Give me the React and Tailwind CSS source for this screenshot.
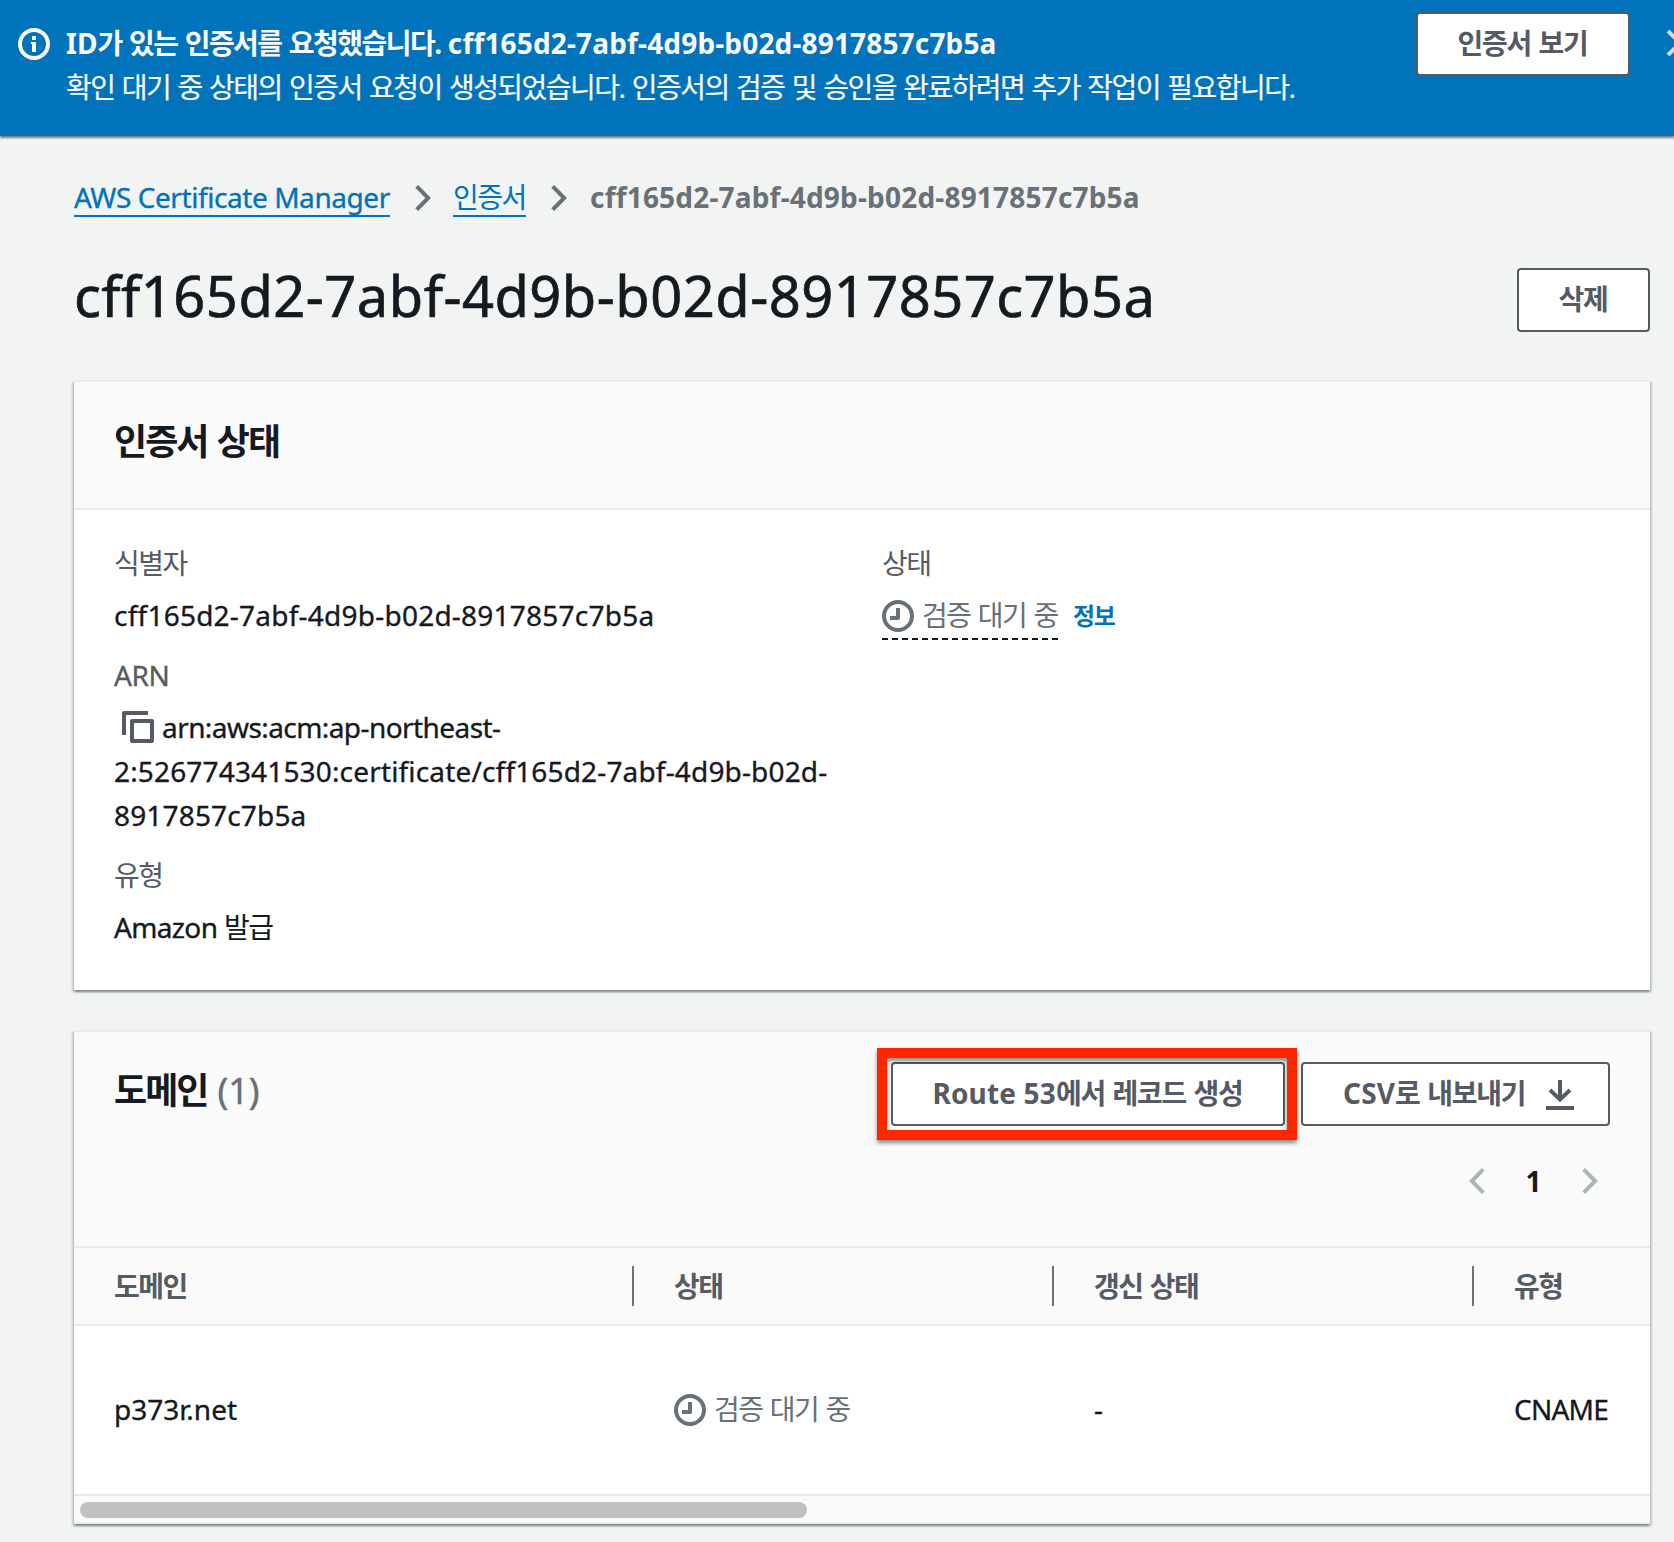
const CERT_ID = 'cff165d2-7abf-4d9b-b02d-8917857c7b5a';

/* Korean runs are set tighter than Latin ones, with the word gap kept. */
function Ko({ children, className = '' }) {
  return (
    <span className={'tracking-[-0.055em] [word-spacing:0.056em] ' + className}>{children}</span>
  );
}

/* Button labels carry a little extra letter spacing. */
function KoLabel({ children }) {
  return <span className="tracking-[-0.045em] [word-spacing:0.056em]">{children}</span>;
}

/* Latin body text, slightly heavier than regular. */
function Latin({ children, className = '' }) {
  return <span className={'[-webkit-text-stroke:0.012em_currentColor] ' + className}>{children}</span>;
}

function InfoIcon() {
  return (
    <svg viewBox="0 0 16 16" className="block size-8 shrink-0" fill="none">
      <circle cx="8" cy="8" r="7" stroke="currentColor" strokeWidth="2" />
      <path d="M7 4h2v2H7zM6.5 7H9v5H7V8h-.5z" fill="currentColor" />
    </svg>
  );
}

function PendingIcon() {
  return (
    <svg viewBox="0 0 16 16" className="block size-8 shrink-0" fill="none" stroke="currentColor" strokeWidth="2">
      <circle cx="8" cy="8" r="7" />
      <path d="M8 4v5H4" strokeLinejoin="round" />
    </svg>
  );
}

function CloseIcon() {
  return (
    <svg viewBox="0 0 16 16" className="block size-8 shrink-0" fill="none" stroke="currentColor" strokeWidth="2">
      <path d="m2 2 12 12M14 2 2 14" />
    </svg>
  );
}

function CopyIcon() {
  return (
    <svg viewBox="0 0 16 16" className="block size-8 shrink-0 text-[#545b64]" fill="none" stroke="currentColor" strokeWidth="2" strokeLinejoin="round">
      <path d="M1 12V1h12" />
      <path d="M5 5h10v10H5z" />
    </svg>
  );
}

function DownloadIcon() {
  return (
    <svg viewBox="0 0 16 16" className="block size-8 shrink-0" fill="none" stroke="currentColor" strokeWidth="2">
      <path d="M8 1v10M3 6l5 4.8L13 6" />
      <path d="M1 15h14" />
    </svg>
  );
}

function Chevron({ left = false, className = '' }) {
  return (
    <svg viewBox="0 0 16 26" className={'block h-[26px] w-4 shrink-0 ' + className} fill="none" stroke="currentColor" strokeWidth="4">
      <path d={left ? 'M14.3 1.4 2.8 13l11.5 11.6' : 'M1.7 1.4 13.2 13 1.7 24.6'} />
    </svg>
  );
}

function Button({ children, icon, className = '' }) {
  return (
    <button
      className={
        'flex h-16 shrink-0 items-center rounded-[4px] border-2 border-[#545b64] bg-white font-bold whitespace-nowrap text-[#545b64] ' +
        (icon ? 'justify-between pr-8 pl-10 ' : 'justify-center ') +
        className
      }
    >
      <span className="pr-px pb-[2px] tracking-[0.15px]">{children}</span>
      {icon}
    </button>
  );
}

function Card({ children, className = '' }) {
  return (
    <section
      className={
        'border-t-2 border-[#eaeded] bg-white shadow-[0_2px_2px_0_rgba(0,28,36,0.3),2px_2px_2px_0_rgba(0,28,36,0.15),-2px_2px_2px_0_rgba(0,28,36,0.15)] ' +
        className
      }
    >
      {children}
    </section>
  );
}

function Field({ label, children }) {
  return (
    <div>
      <div className="mb-2 text-[#545b64]">{label}</div>
      <div>{children}</div>
    </div>
  );
}

function HeaderCell({ children, divided = true }) {
  return (
    <div className="flex h-[76px] items-center">
      <span className="flex-1 pb-px pl-10 font-bold text-[#545b64]">
        <Ko>{children}</Ko>
      </span>
      {divided && <span className="h-10 w-[2px] bg-[#687078]" />}
    </div>
  );
}

export default function App() {
  return (
    <div className="h-[1542px] w-[1674px] overflow-hidden bg-[#f2f3f3] font-['Noto_Sans','Noto_Sans_CJK_KR',sans-serif] text-[28px] leading-[44px] text-[#16191f]">
      <header className="flex h-[136px] items-start bg-[#0073bb] pl-[18px] text-[#fafafa] shadow-[0_2px_2px_0_rgba(0,0,0,0.5)]">
        <div className="pt-7">
          <InfoIcon />
        </div>
        <div className="ml-4 flex-1 pt-[21px] whitespace-nowrap">
          <div className="font-bold">
            ID<Ko>가 있는 인증서를 요청했습니다. </Ko>
            <span className="tracking-[0.16px]">{CERT_ID}</span>
          </div>
          <div>
            <Ko className="[-webkit-text-stroke:0.2px_currentColor]">
              확인 대기 중 상태의 인증서 요청이 생성되었습니다. 인증서의 검증 및 승인을 완료하려면 추가 작업이 필요합니다.
            </Ko>
          </div>
        </div>
        <Button className="mt-3 w-[214px]">
          <KoLabel>인증서 보기</KoLabel>
        </Button>
        <div className="mt-[27px] ml-[34px] w-[10px] overflow-hidden text-[#d5dbdb]">
          <CloseIcon />
        </div>
      </header>

      <main className="pr-6 pl-[74px]">
        <nav className="flex items-start pt-[39px] whitespace-nowrap">
          <a className="block h-[42px] w-[316px] border-b-2 border-[#0073bb] text-[#0073bb]">
            <Latin className="tracking-[-0.43px]">AWS Certificate Manager</Latin>
          </a>
          <Chevron className="mt-[10px] ml-[25px] text-[#687078]" />
          <a className="ml-[22px] block h-[42px] w-[73px] border-b-2 border-[#0073bb] text-[#0073bb]">
            <Ko>인증서</Ko>
          </a>
          <Chevron className="mt-[10px] ml-[25px] text-[#687078]" />
          <span className="ml-[23px] font-bold tracking-[0.19px] text-[#687078]">{CERT_ID}</span>
        </nav>

        <div className="mt-[42px] flex h-[119px] items-start justify-between">
          <h1 className="text-[56px] leading-[68px]">
            <Latin className="tracking-[0.48px]">{CERT_ID}</Latin>
          </h1>
          <Button className="mt-[7px] w-[133px]">
            <KoLabel>삭제</KoLabel>
          </Button>
        </div>

        <Card className="h-[610px]">
          <div className="h-[128px] border-b-2 border-[#eaeded] bg-[#fafafa] pt-[38px] pl-10">
            <h2 className="text-[36px] font-bold">
              <Ko>인증서 상태</Ko>
            </h2>
          </div>
          <div className="flex pt-[31px] pl-10">
            <div className="flex w-[768px] flex-col gap-4">
              <Field label={<Ko>식별자</Ko>}>
                <Latin className="tracking-[0.23px]">{CERT_ID}</Latin>
              </Field>
              <Field label={<Latin className="tracking-[-0.4px]">ARN</Latin>}>
                <div className="flex items-center pl-2">
                  <CopyIcon />
                  <Latin className="ml-2 tracking-[-0.57px]">arn:aws:acm:ap-northeast-</Latin>
                </div>
                <Latin className="tracking-[0.16px]">
                  2:526774341530:certificate/cff165d2-7abf-4d9b-b02d-
                  <br />
                  8917857c7b5a
                </Latin>
              </Field>
              <Field label={<Ko>유형</Ko>}>
                <Latin className="tracking-[-0.65px]">Amazon </Latin>
                <Ko>발급</Ko>
              </Field>
            </div>
            <Field label={<Ko>상태</Ko>}>
              <div className="flex items-start">
                <div className="flex h-[47px] w-[176px] items-start border-b-2 border-dashed border-[#16191f] text-[#687078]">
                  <div className="mt-[7px]">
                    <PendingIcon />
                  </div>
                  <Ko className="ml-2 whitespace-nowrap">검증 대기 중</Ko>
                </div>
                <a className="mt-px ml-[15px] text-[24px] font-bold text-[#0073bb]">
                  <Ko>정보</Ko>
                </a>
              </div>
            </Field>
          </div>
        </Card>

        <Card className="mt-10">
          <div className="h-[216px] border-b-2 border-[#eaeded] bg-[#fafafa] pr-10 pl-10">
            <div className="flex items-start justify-between">
              <h2 className="pt-[37px] text-[36px] font-bold">
                <Ko>도메인</Ko>
                <Latin className="ml-[10px] font-normal text-[#687078]">(1)</Latin>
              </h2>
              <div className="flex gap-4 pt-[30px]">
                <div className="relative">
                  <Button className="w-[394px]">
                    Route 53<KoLabel>에서 레코드 생성</KoLabel>
                  </Button>
                  <div className="absolute -top-[14px] -left-[14px] h-[92px] w-[420px] border-[10px] border-[#ff2600] drop-shadow-[0_3px_2px_rgba(0,0,0,0.45)]" />
                </div>
                <Button className="w-[309px]" icon={<DownloadIcon />}>
                  CSV<KoLabel>로 내보내기</KoLabel>
                </Button>
              </div>
            </div>
            <div className="mt-[33px] flex items-center justify-end pr-3 text-[#aab7b8]">
              <Chevron left />
              <span className="w-[97px] text-center font-bold text-[#16191f]">1</span>
              <Chevron />
            </div>
          </div>

          <div className="grid grid-cols-[560px_420px_420px_176px] border-b-2 border-[#eaeded] bg-[#fafafa]">
            <HeaderCell>도메인</HeaderCell>
            <HeaderCell>상태</HeaderCell>
            <HeaderCell>갱신 상태</HeaderCell>
            <HeaderCell divided={false}>유형</HeaderCell>
          </div>

          <div className="grid h-[168px] grid-cols-[560px_420px_420px_176px] items-center">
            <Latin className="pb-[2px] pl-10">p373r.net</Latin>
            <span className="flex items-center pl-10 text-[#687078]">
              <PendingIcon />
              <Ko className="ml-2 pb-[2px]">검증 대기 중</Ko>
            </span>
            <Latin className="pb-[2px] pl-10">-</Latin>
            <Latin className="pb-[2px] pl-10 tracking-[-0.75px]">CNAME</Latin>
          </div>

          <div className="h-[30px] border-t-2 border-b-2 border-t-[#e8e8e8] border-b-[#eeeeee] bg-[#fafafa] pt-[6px] pl-[6px]">
            <div className="h-4 w-[727px] rounded-full bg-[#c1c1c1]" />
          </div>
        </Card>
      </main>
    </div>
  );
}
